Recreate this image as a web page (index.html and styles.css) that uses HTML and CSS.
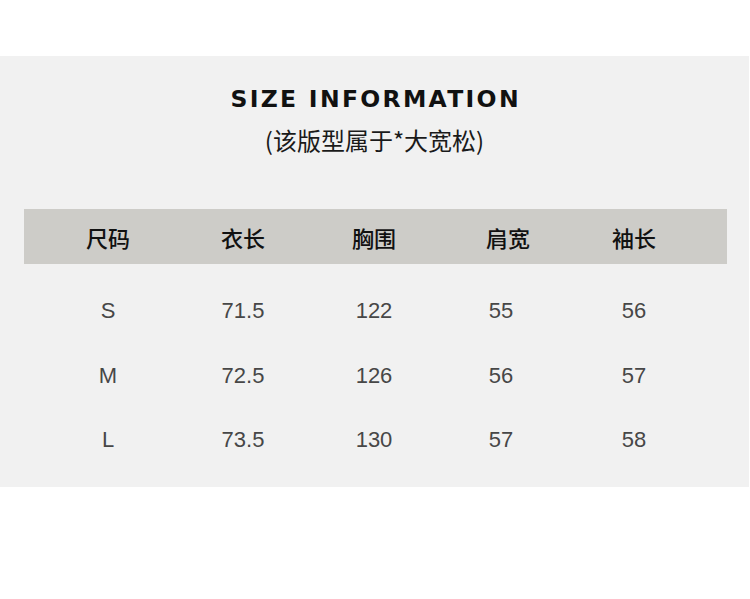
FILE: index.html
```html
<!DOCTYPE html>
<html lang="zh-CN">
<head>
<meta charset="utf-8">
<title>Size Information</title>
<link rel="stylesheet" href="styles.css">
</head>
<body>
<section class="panel">
  <h1 class="title">SIZE INFORMATION</h1>
  <p class="subtitle">(该版型属于*大宽松)</p>
  <div class="table">
    <div class="row head">
      <div class="cell">尺码</div>
      <div class="cell">衣长</div>
      <div class="cell">胸围</div>
      <div class="cell shift">肩宽</div>
      <div class="cell">袖长</div>
    </div>
    <div class="body">
      <div class="row">
        <div class="cell">S</div>
        <div class="cell">71.5</div>
        <div class="cell">122</div>
        <div class="cell">55</div>
        <div class="cell">56</div>
      </div>
      <div class="row">
        <div class="cell">M</div>
        <div class="cell">72.5</div>
        <div class="cell">126</div>
        <div class="cell">56</div>
        <div class="cell">57</div>
      </div>
      <div class="row">
        <div class="cell">L</div>
        <div class="cell">73.5</div>
        <div class="cell">130</div>
        <div class="cell">57</div>
        <div class="cell">58</div>
      </div>
    </div>
  </div>
</section>
</body>
</html>
```
FILE: styles.css
```css
html, body {
  margin: 0;
  padding: 0;
  background: #ffffff;
}

body {
  font-family: "Liberation Sans", "Noto Sans CJK SC", sans-serif;
}

.panel {
  margin-top: 56px;
  width: 749px;
  height: 431px;
  box-sizing: border-box;
  background: #f1f1f1;
  padding-top: 27px;
}

.title {
  margin: 0;
  height: 32px;
  line-height: 32px;
  text-align: center;
  font-family: "DejaVu Sans", sans-serif;
  font-weight: 700;
  font-size: 23.5px;
  letter-spacing: 2.3px;
  text-indent: 2.3px;
  color: #111111;
}

.subtitle {
  margin: 10px 0 0;
  height: 30px;
  line-height: 30px;
  text-align: center;
  font-family: "Noto Sans CJK SC", sans-serif;
  font-size: 24px;
  color: #1a1a1a;
}

.table {
  margin: 54px 0 0 24px;
  width: 703px;
}

.row {
  display: grid;
  grid-template-columns: 136px 134px 128px 126px 140px;
  padding-left: 16px;
  align-items: center;
}

.head {
  height: 55px;
  background: #cdccc8;
  font-family: "Noto Sans CJK SC", sans-serif;
  font-size: 22px;
  font-weight: 500;
  color: #111111;
}

.cell {
  text-align: center;
}

.head .shift {
  padding-left: 14px;
}

.body {
  padding-top: 15px;
}

.body .row {
  height: 64.5px;
  font-family: "Liberation Sans", sans-serif;
  font-size: 22px;
  color: #474747;
}
```
